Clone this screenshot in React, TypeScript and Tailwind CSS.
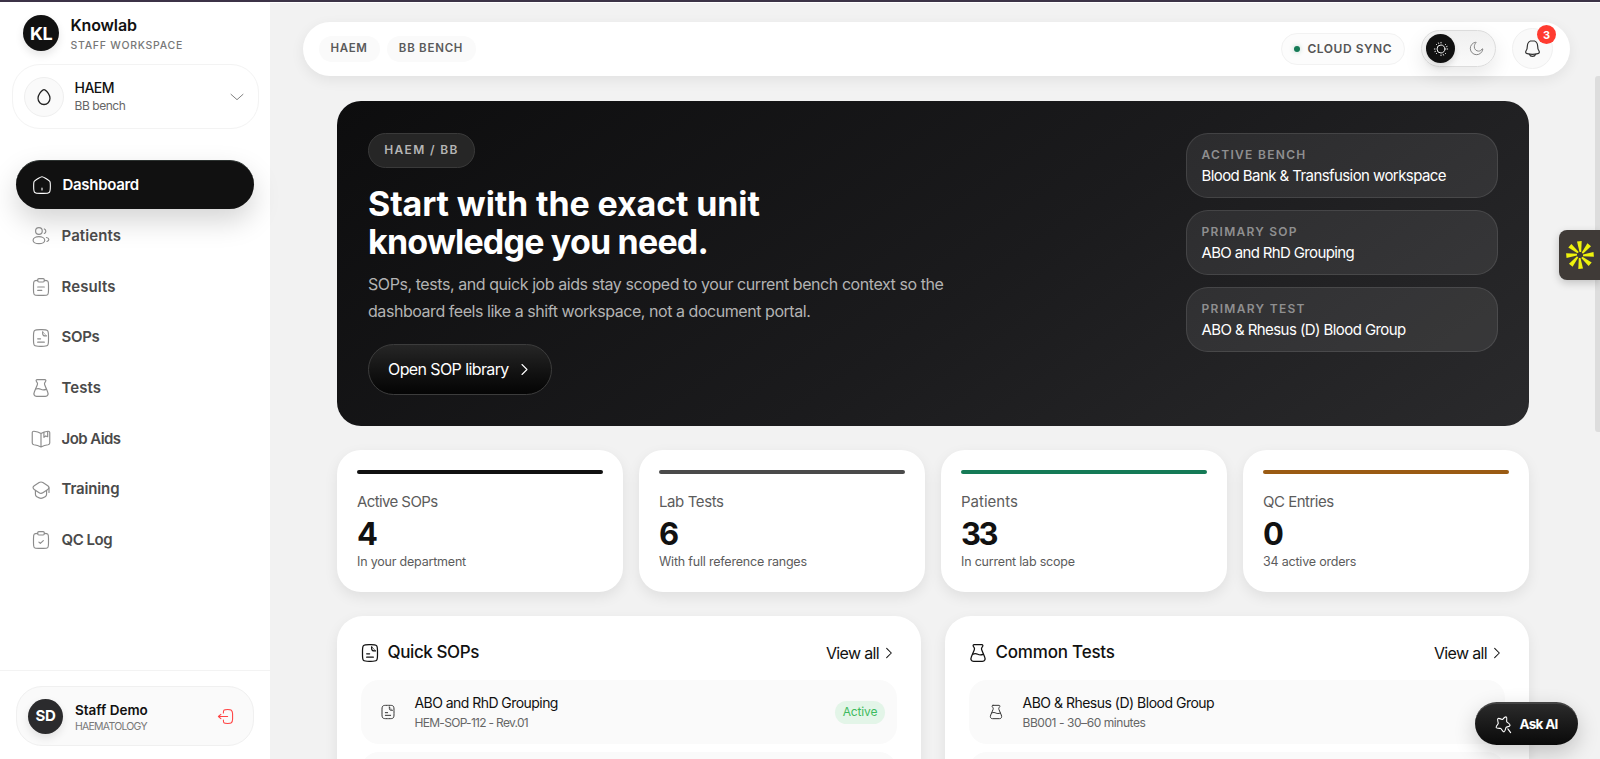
import type { ReactNode } from "react";

type IconProps = { className?: string; sw?: number };

function Svg({ className = "size-5", sw = 1.4, children }: IconProps & { children: ReactNode }) {
  return (
    <svg
      viewBox="0 0 24 24"
      fill="none"
      stroke="currentColor"
      strokeWidth={sw}
      strokeLinecap="round"
      strokeLinejoin="round"
      className={`shrink-0 ${className}`}
    >
      {children}
    </svg>
  );
}

const clipboard = (
  <>
    <path d="M16 4c2.175.012 3.353.109 4.121.877C21 5.758 21 7.172 21 10v6c0 2.829 0 4.243-.879 5.122C19.243 22 17.828 22 15 22H9c-2.828 0-4.243 0-5.121-.878C3 20.242 3 18.829 3 16v-6c0-2.828 0-4.242.879-5.121C4.647 4.109 5.825 4.012 8 4" />
    <path d="M8 3.5A1.5 1.5 0 0 1 9.500 2h5A1.500 1.500 0 0 1 16 3.500v1A1.500 1.500 0 0 1 14.500 6h-5A1.500 1.500 0 0 1 8 4.500z" />
  </>
);

const HomeIcon = (p: IconProps) => (
  <Svg {...p}>
    <path d="M2 12.200c0-2.290 0-3.430.520-4.380.520-.950 1.470-1.540 3.370-2.720l2-1.240C9.890 2.620 10.890 2 12 2s2.110.620 4.110 1.860l2 1.240c1.900 1.180 2.850 1.770 3.370 2.720.520.950.520 2.090.520 4.380v1.520c0 3.900 0 5.850-1.170 7.070C19.660 22 17.770 22 14 22h-4c-3.770 0-5.660 0-6.830-1.210C2 19.580 2 17.630 2 13.720z" />
    <path d="M12 15.500v2.500" />
  </Svg>
);
const UsersIcon = (p: IconProps) => (
  <Svg {...p}>
    <circle cx="9.500" cy="6" r="4" />
    <ellipse cx="9.500" cy="17" rx="7" ry="4.200" />
    <path d="M16 3.500a3 3 0 0 1 0 5.500M18.500 13.800c1.700.400 2.900 1.300 2.900 2.500 0 1-.9 1.900-2.200 2.300" />
  </Svg>
);
const ResultsIcon = (p: IconProps) => (
  <Svg {...p}>
    {clipboard}
    <path d="M8 12h8M8 16h5" />
  </Svg>
);
const QcIcon = (p: IconProps) => (
  <Svg {...p}>
    {clipboard}
    <path d="m9.500 14.500 1.700 1.600 3.600-3.400" />
  </Svg>
);
const SopIcon = (p: IconProps) => (
  <Svg {...p}>
    <path d="M3 10c0-3.770 0-5.660 1.170-6.830S7.230 2 11 2h2c3.770 0 5.660 0 6.830 1.170S21 6.230 21 10v4c0 3.770 0 5.660-1.170 6.830S16.770 22 13 22h-2c-3.770 0-5.660 0-6.830-1.170S3 17.770 3 14z" />
    <path d="M14 4.500V6.500A3 3 0 0 0 17 9.500H18.500M8 13h3.500M8 17h8" />
    <path d="m14.300 4.600 4 4.600" strokeWidth={0.7} />
  </Svg>
);
const FlaskIcon = (p: IconProps) => (
  <Svg {...p}>
    <path d="M7.500 2h9c1.400 0 1.700 1.200 1 2.200l-.9 1.300c-.5.900-.6 1.700-.2 2.700l3.500 8.300c1.300 3 .3 5.500-2.700 5.500H6.800c-3 0-4-2.500-2.700-5.500l3.500-8.300c.4-1 .3-1.800-.2-2.700L6.500 4.200C5.800 3.200 6.100 2 7.500 2Z" />
    <path d="M5.800 13.300c2.200-.9 4.200-.7 5.900.2 1.900 1 4 1.100 6.500.2" />
  </Svg>
);
const BookIcon = (p: IconProps) => (
  <Svg {...p}>
    <path d="M12 5.500v16M12 5.500C9.500 3.900 6.500 3 3.500 2.700 2.300 2.600 1.500 3.300 1.500 4.500v12.300c0 1.200.8 1.900 2 2.100 3 .4 5.700 1.200 8.500 2.600 2.800-1.400 5.500-2.200 8.500-2.600 1.200-.2 2-.9 2-2.100V4.500c0-1.200-.8-1.900-2-1.800-3 .3-6 1.200-8.500 2.800Z" />
    <path d="M15.500 4v6l2.200-1.700L20 9.300V3" />
  </Svg>
);
const CapIcon = (p: IconProps) => (
  <Svg {...p}>
    <path d="M9.780 3c1.360-.770 3.080-.770 4.440 0l5.900 3.900c1.900 1.250 1.900 3.200 0 4.450l-5.900 3.900c-1.360.880-3.080.880-4.440 0l-5.900-3.900c-1.900-1.250-1.900-3.200 0-4.450z" />
    <path d="M5.300 12.600v4.600c0 1.100.6 2.300 1.600 2.900C8.400 21 10 22 12 22s3.600-1 5.100-1.900c1-.6 1.600-1.800 1.600-2.900v-4.600M21.600 9.500V15" />
  </Svg>
);
const DropIcon = (p: IconProps) => (
  <Svg {...p}>
    <path d="M4 13.700C4 9.100 8 4.300 10.300 2.800a3 3 0 0 1 3.400 0C16 4.300 20 9.100 20 13.700 20 18.600 16.400 22 12 22s-8-3.400-8-8.300Z" />
  </Svg>
);
const LogoutIcon = (p: IconProps) => (
  <Svg {...p}>
    <path d="M9 7c.01-2.200.1-3.350.880-4.120C10.760 2 12.170 2 15 2s4.240 0 5.120.880C21 3.760 22 5.170 22 8v8c0 2.830-1 4.240-1.880 5.120S17.830 22 15 22s-4.240 0-5.120-.880C9.110 20.350 9.010 19.180 9 17" />
    <path d="M15 12H2m0 0 3.500-3M2 12l3.500 3" />
  </Svg>
);
const BellIcon = (p: IconProps) => (
  <Svg {...p}>
    <path d="M12 2C8.200 2 5.500 5 5.500 8.700c0 2.800-.4 4.300-1.600 6.200-1.100 1.700-.6 3.100 1.400 3.600 4.300 1.100 9.100 1.100 13.400 0 2-.5 2.500-1.900 1.400-3.600-1.200-1.900-1.600-3.400-1.600-6.200C18.500 5 15.800 2 12 2Z" />
    <path d="M8 19.300c.6 1.600 2.100 2.700 4 2.700s3.400-1.100 4-2.700" />
  </Svg>
);
const SunIcon = (p: IconProps) => (
  <Svg {...p}>
    <circle cx="12" cy="12" r="6" />
    <path d="M12 2v1M12 21v1M22 12h-1M3 12H2M19 5l-.4.400M5.400 18.600 5 19M19 19l-.4-.4M5.400 5.400 5 5M8.200 2.900l.3.800M15.500 20.300l.3.800M21.100 8.200l-.8.300M3.700 15.500l-.8.300" />
  </Svg>
);
const MoonIcon = (p: IconProps) => (
  <Svg {...p}>
    <path d="M21.100 12.900c-1.200 2-3.300 3.300-5.700 3.300A6.900 6.900 0 0 1 8.500 9.300c0-2.600 1-5 2.800-6.700.4-.5 0-.8-.6-.6A10 10 0 1 0 22 13.300c.1-.6-.6-.9-.9-.4Z" />
  </Svg>
);
const SparkStar = (p: IconProps) => (
  <Svg {...p}>
    <path d="M11.500 4.700c1.700-1.700 3-2.700 4-2.200s.8 1.900.5 4.200c-.1.900-.1 1.300.1 1.700s.6.700 1.300 1.200c2 1.400 3.100 2.300 2.900 3.400s-1.300 1.500-3.500 2c-.8.200-1.200.3-1.500.600s-.4.800-.6 1.700c-.6 2.500-1 3.900-2.100 4s-1.800-1-3-3c-.4-.7-.7-1.100-1.100-1.300s-.9-.1-1.700-.1c-2.400 0-3.700 0-4.100-1s.3-2.100 1.800-3.800c.6-.7.8-1 .9-1.400s-.1-.9-.3-1.700c-.6-2.300-1-3.600-.2-4.400s2.100-.3 4.300.6c.8.300 1.200.5 1.600.4s.7-.3 1.300-.9Z" />
    <path d="m17.500 17.500 3.500 4.800" />
  </Svg>
);
const ChevronRight = (p: IconProps) => (
  <Svg {...p}>
    <path d="m8 4 8 8-8 8" />
  </Svg>
);
const ChevronDown = (p: IconProps) => (
  <Svg {...p}>
    <path d="m3 8 9 8 9-8" />
  </Svg>
);

const nav = [
  { label: "Patients", Icon: UsersIcon, tracking: "tracking-[0.100px]" },
  { label: "Results", Icon: ResultsIcon, tracking: "tracking-[0.100px]" },
  { label: "SOPs", Icon: SopIcon, tracking: "tracking-[-0.3px]" },
  { label: "Tests", Icon: FlaskIcon, tracking: "tracking-[0.050px]" },
  { label: "Job Aids", Icon: BookIcon, tracking: "tracking-[-0.550px]" },
  { label: "Training", Icon: CapIcon, tracking: "tracking-[-0.150px]" },
  { label: "QC Log", Icon: QcIcon, tracking: "tracking-[-0.450px]" },
];

function Sidebar() {
  return (
    <aside className="flex w-[270px] shrink-0 flex-col bg-white">
      <div className="flex h-[62px] gap-[11.500px] pt-[13px] pl-[23px]">
        <div className="flex size-9 items-center justify-center rounded-full bg-[#111111] text-[18px] font-bold tracking-[-0.6px] text-white shadow-[0_4px_8px_rgba(0,0,0,0.1)]">
          KL
        </div>
        <div>
          <div className="text-[16px] leading-5 font-semibold tracking-[-0.15px] text-[#111]">Knowlab</div>
          <div className="mt-[2.500px] text-[10.500px] leading-4 font-medium tracking-[0.73px] text-[#777]">STAFF WORKSPACE</div>
        </div>
      </div>
      <div className="mr-[11.500px] ml-[11.500px] flex h-[65px] items-center rounded-[28px] border border-[#f3f3f3] pr-[13px] pl-[11px]">
        <div className="flex size-10 items-center justify-center rounded-full border border-[#efefef] bg-[#fafafa] text-[#222]">
          <DropIcon className="size-[18px]" sw={1.7} />
        </div>
        <div className="ml-[11px] flex-1">
          <div className="text-[14px] leading-[18px] font-medium tracking-[-0.5px] text-[#111]">HAEM</div>
          <div className="text-[12px] leading-[17px] tracking-[-0.45px] text-[#666]">BB bench</div>
        </div>
        <ChevronDown className="size-4 text-[#777]" sw={1.4} />
      </div>

      <nav className="mt-[31px] flex flex-col gap-[2px] px-4">
        <div className="flex h-[48.800px] items-center gap-[10.500px] rounded-full border-t border-[#2c3230] bg-[#111111] pl-4 text-white shadow-[0_12px_28px_rgba(0,0,0,0.17)]">
          <HomeIcon sw={1.3} />
          <span className="text-[15px] font-semibold tracking-[-0.3px]">Dashboard</span>
        </div>
        {nav.map(({ label, Icon, tracking }) => (
          <div key={label} className="flex h-[48.700px] items-center gap-[10.500px] pt-[2px] pl-[15px] text-[#8c8c8c]">
            <Icon />
            <span className={`text-[15px] font-semibold text-[#4a4a4a] ${tracking}`}>{label}</span>
          </div>
        ))}
      </nav>

      <div className="mt-auto h-[89px] border-t border-[#f3f3f3] px-4 pt-[15px]">
        <div className="flex h-[60px] items-center rounded-[26px] border border-[#f0f0f0] bg-[#fafafa] pr-[19px] pl-[11px]">
          <div className="flex size-[35px] items-center justify-center rounded-full bg-[#2b2b2d] text-[15px] font-bold tracking-[-0.4px] text-white shadow-[0_4px_8px_rgba(0,0,0,0.1)]">
            SD
          </div>
          <div className="ml-3 flex-1 pt-[3px]">
            <div className="text-[13.500px] leading-[18px] font-semibold tracking-[0px] text-[#111]">Staff Demo</div>
            <div className="text-[10.500px] leading-[15px] tracking-[-0.75px] text-[#777]">HAEMATOLOGY</div>
          </div>
          <LogoutIcon className="size-[17px] text-[#f44]" sw={1.5} />
        </div>
      </div>
    </aside>
  );
}

function Header() {
  return (
    <header className="ml-[33px] flex h-[54.500px] w-[1267px] shrink-0 items-center rounded-full bg-white pr-[17px] pl-[15.500px] shadow-[0_4px_14px_rgba(0,0,0,0.07)]">
      <div className="flex gap-[7px] text-[11.500px] font-semibold text-[#5a5a5a]">
        <span className="flex h-[26px] w-[61px] items-center justify-center rounded-full bg-[#fafafa] tracking-[0.6px]">HAEM</span>
        <span className="flex h-[26px] w-[89px] items-center justify-center rounded-full bg-[#fafafa] tracking-[0.750px]">BB BENCH</span>
      </div>
      <div className="ml-auto flex h-8 w-[124px] items-center gap-2 rounded-full border border-[#f2f2f2] bg-[#fcfcfc] pl-3">
        <span className="size-[6px] rounded-full bg-[#157a56] shadow-[0_0_5px_rgba(21,122,86,0.3)]" />
        <span className="-ml-[0.500px] text-[12px] font-semibold tracking-[0.52px] whitespace-nowrap text-[#555]">CLOUD SYNC</span>
      </div>
      <div className="ml-4 flex h-[37px] w-[75px] items-center rounded-full border border-[#dcdcdc] bg-linear-to-b from-[#f0f0f0] to-[#fafafa] pl-[4px] shadow-[0_8px_20px_rgba(0,0,0,0.09)]">
        <span className="flex size-[29px] items-center justify-center rounded-full bg-[#111] text-white shadow-[0_4px_6px_rgba(0,0,0,0.12)]">
          <SunIcon className="size-4" sw={1.4} />
        </span>
        <MoonIcon className="ml-[14px] size-[15px] text-[#777]" sw={1.4} />
      </div>
      <div className="relative ml-4 flex size-[41px] items-center justify-center rounded-full border border-[#f0f0f0] bg-[#fafafa] text-[#333]">
        <BellIcon className="size-[19px]" sw={1.500} />
        <span className="absolute -top-[4px] -right-[4px] flex size-[19px] items-center justify-center rounded-full bg-[#ff3b30] text-[11px] font-bold text-white">
          3
        </span>
      </div>
    </header>
  );
}

const facts = [
  { label: "ACTIVE BENCH", value: "Blood Bank & Transfusion workspace", tracking: "tracking-[-0.58px]", lt: "tracking-[1.300px]" },
  { label: "PRIMARY SOP", value: "ABO and RhD Grouping", tracking: "tracking-[-0.65px]", lt: "tracking-[1.250px]" },
  { label: "PRIMARY TEST", value: "ABO & Rhesus (D) Blood Group", tracking: "tracking-[-0.58px]", lt: "tracking-[1.300px]" },
];

function Hero() {
  return (
    <section className="flex h-[325px] justify-between rounded-[24px] bg-linear-[145deg,#0d0d0e_0%,#1b1b1d_55%,#2a2a2c_100%] px-[31px] pt-[31.500px]">
      <div>
        <div className="flex h-[35px] w-[107px] items-center justify-center rounded-full border border-[#3a3a3a] bg-[#262626] text-[12px] font-semibold tracking-[1.350px] text-[#b5b5b5]">
          HAEM / BB
        </div>
        <h1 className="mt-[17.500px] text-[34px] leading-[38.300px] font-bold text-white">
          <span className="block tracking-[-0.13px]">Start with the exact unit</span>
          <span className="block tracking-[-0.8px]">knowledge you need.</span>
        </h1>
        <p className="mt-[9.500px] text-[16px] leading-[26.800px] text-[#b3b3b3]">
          <span className="block tracking-[-0.43px]">SOPs, tests, and quick job aids stay scoped to your current bench context so the</span>
          <span className="block tracking-[-0.45px]">dashboard feels like a shift workspace, not a document portal.</span>
        </p>
        <button className="mt-[19px] flex h-[51px] w-[184px] items-center rounded-full border border-[#3c3c3c] bg-linear-to-b from-[#262626] to-[#050505] pl-[19px] text-[16px] tracking-[-0.6px] text-white">
          Open SOP library
          <ChevronRight className="ml-2 size-[15px]" sw={1.700} />
        </button>
      </div>
      <div className="flex w-[312.500px] flex-col gap-[11.500px]">
        {facts.map((f) => (
          <div key={f.label} className="h-[65.500px] rounded-[22px] border border-white/10 bg-white/[0.08] px-[15px] pt-[11px]">
            <div className={`text-[12px] leading-[20px] font-semibold text-[#8f8f90] ${f.lt}`}>{f.label}</div>
            <div className={`text-[15px] leading-[21px] text-white ${f.tracking}`}>{f.value}</div>
          </div>
        ))}
      </div>
    </section>
  );
}

const stats = [
  { label: "Active SOPs", value: "4", sub: "In your department", bar: "bg-[#111111]", lt: "tracking-[-0.6px]" },
  { label: "Lab Tests", value: "6", sub: "With full reference ranges", bar: "bg-[#4a4a4a]", lt: "tracking-[-0.4px]" },
  { label: "Patients", value: "33", sub: "In current lab scope", bar: "bg-[#157a56]", lt: "tracking-[0px]" },
  { label: "QC Entries", value: "0", sub: "34 active orders", bar: "bg-[#9a5b13]", lt: "tracking-[-0.5px]" },
];

function Stats() {
  return (
    <section className="mt-6 grid grid-cols-4 gap-4">
      {stats.map((s) => (
        <div key={s.label} className="h-[142px] rounded-[24px] bg-white px-5 pt-5 shadow-[0_5px_14px_rgba(0,0,0,0.08)]">
          <div className={`h-1 rounded-full ${s.bar}`} />
          <div className={`mt-[18px] text-[15px] leading-[20px] text-[#5c5c5c] ${s.lt}`}>{s.label}</div>
          <div className="mt-[5px] text-[31px] leading-[34px] font-bold tracking-[-2.400px] text-[#111]">{s.value}</div>
          <div className="mt-px text-[12.500px] leading-[20px] tracking-[-0.2px] text-[#5c5c5c]">{s.sub}</div>
        </div>
      ))}
    </section>
  );
}

type PanelProps = {
  title: string;
  titleTracking: string;
  Icon: (p: IconProps) => ReactNode;
  item: string;
  itemTracking: string;
  sub: string;
  subTracking: string;
  active?: boolean;
};

function Panel({ title, titleTracking, Icon, item, itemTracking, sub, subTracking, active }: PanelProps) {
  return (
    <div className="h-[300px] rounded-[26px] bg-white px-6 pt-6 shadow-[0_5px_14px_rgba(0,0,0,0.08)]">
      <div className="flex h-6 items-center pt-[2px] text-[#111]">
        <Icon className="-ml-px size-5" sw={1.500} />
        <span className={`ml-[7.500px] text-[17px] font-medium ${titleTracking}`}>{title}</span>
        <span className="ml-auto text-[16px] tracking-[-0.65px]">View all</span>
        <ChevronRight className="mr-px ml-[3px] size-[14px]" sw={1.800} />
      </div>
      <div className="mt-4 flex h-[64px] items-center rounded-[18px] bg-[#fafafa] pr-[12px] pl-[19px]">
        <Icon className="size-4 text-[#333]" sw={1.500} />
        <div className="ml-[18.500px] flex-1">
          <div className={`text-[14px] leading-[20px] text-[#111] ${itemTracking}`}>{item}</div>
          <div className={`text-[12px] leading-[19px] text-[#666] ${subTracking}`}>{sub}</div>
        </div>
        {active && (
          <span className="flex h-[23px] w-[50px] items-center justify-center rounded-full bg-[#e3f5e8] text-[12px] tracking-[-0.15px] text-[#3dbb5e]">
            Active
          </span>
        )}
      </div>
      <div className="mt-2 h-[64px] rounded-[18px] bg-[#fafafa]" />
    </div>
  );
}

const rays = [0, 45, 90, 135, 180, 225, 270, 315];

export default function App() {
  return (
    <div className="relative h-[759px] w-[1600px] overflow-hidden border-t-2 border-[#3c3347] bg-[#f2f2f2] font-['Inter',sans-serif]">
      <div className="flex h-[757px]">
        <Sidebar />
        <main className="flex-1 border-t border-white pt-[18.500px]">
          <Header />
          <div className="ml-[67px] w-[1192px] pt-[25px]">
            <Hero />
            <Stats />
            <section className="mt-6 grid grid-cols-2 gap-6">
              <Panel
                title="Quick SOPs"
                titleTracking="tracking-[-0.400px]"
                Icon={SopIcon}
                item="ABO and RhD Grouping"
                itemTracking="tracking-[-0.55px]"
                sub="HEM-SOP-112 - Rev.01"
                subTracking="tracking-[-0.700px]"
                active
              />
              <Panel
                title="Common Tests"
                titleTracking="tracking-[-0.2px]"
                Icon={FlaskIcon}
                item="ABO & Rhesus (D) Blood Group"
                itemTracking="tracking-[-0.5px]"
                sub="BB001 - 30–60 minutes"
                subTracking="tracking-[-0.44px]"
              />
            </section>
          </div>
        </main>
      </div>

      <div className="absolute top-[74px] right-0 h-[356px] w-[5px] rounded-l-[3px] bg-[#dddddd]" />
      <div className="absolute top-[228px] right-0 flex h-[50px] w-[41px] items-center justify-center rounded-l-[8px] bg-[#3f3a37] shadow-[0_3px_8px_rgba(0,0,0,0.2)]">
        <svg viewBox="-14 -14 28 28" className="size-7 fill-[#eef20d]">
          {rays.map((a) => (
            <path key={a} d="M-3-13.500 1.700-13.900 1.200-3-.5-3Z" transform={`rotate(${a})`} />
          ))}
        </svg>
      </div>
      <button className="absolute right-[22.500px] bottom-[14px] flex h-[43px] w-[103px] items-center rounded-full border-t-2 border-[#444] bg-linear-to-b from-[#2b2b2b] to-[#0a0a0a] pl-[19px] text-white shadow-[0_8px_22px_rgba(0,0,0,0.2)]">
        <SparkStar className="size-[19px]" sw={1.400} />
        <span className="ml-[7px] text-[13.500px] font-bold tracking-[-0.7px]">Ask AI</span>
      </button>
    </div>
  );
}
